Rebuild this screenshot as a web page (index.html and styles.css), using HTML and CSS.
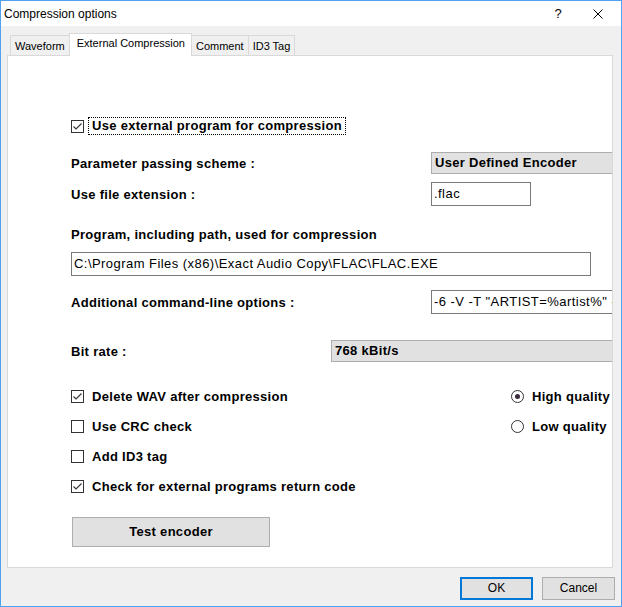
FILE: index.html
```html
<!DOCTYPE html>
<html lang="en">
<head>
    <meta charset="UTF-8">
    <title>Compression options</title>
    <link rel="stylesheet" href="styles.css">
</head>
<body>
    <div class="window">
        <div class="titlebar">
            <span class="title">Compression options</span>
            <span class="help">?</span>
            <span class="close">
                <svg width="10" height="10" viewBox="0 0 10 10"><path d="M0.5 0.5 L9.5 9.5 M9.5 0.5 L0.5 9.5" stroke="#000" stroke-width="1" fill="none"/></svg>
            </span>
        </div>

        <div class="body">
            <div class="tabs">
                <div class="tab">Waveform</div>
                <div class="tab active">External Compression</div>
                <div class="tab">Comment</div>
                <div class="tab">ID3 Tag</div>
            </div>

            <div class="panel">
                <div class="row row-use">
                    <span class="box checked"><svg width="11" height="11" viewBox="0 0 11 11"><path d="M1.5 5.5 L4 8 L9.5 2.5" stroke="#333" stroke-width="1.1" fill="none"/></svg></span>
                    <span class="focus">Use external program for compression</span>
                </div>

                <div class="row row-scheme">
                    <span class="label">Parameter passing scheme :</span>
                    <div class="combo">User Defined Encoder</div>
                </div>

                <div class="row row-ext">
                    <span class="label">Use file extension :</span>
                    <div class="field field-ext">.flac</div>
                </div>

                <div class="row row-prog-label">
                    <span>Program, including path, used for compression</span>
                </div>

                <div class="row row-prog">
                    <div class="field field-prog">C:\Program Files (x86)\Exact Audio Copy\FLAC\FLAC.EXE</div>
                </div>

                <div class="row row-opts">
                    <span class="label">Additional command-line options :</span>
                    <div class="field field-opts">-6 -V -T "ARTIST=%artist%" -T</div>
                </div>

                <div class="row row-bitrate">
                    <span class="label label-short">Bit rate :</span>
                    <div class="combo combo-wide">768 kBit/s</div>
                </div>

                <div class="row row-first">
                    <div class="check">
                        <span class="box checked"><svg width="11" height="11" viewBox="0 0 11 11"><path d="M1.5 5.5 L4 8 L9.5 2.5" stroke="#333" stroke-width="1.1" fill="none"/></svg></span>
                        <span>Delete WAV after compression</span>
                    </div>
                    <div class="radio-item">
                        <span class="radio selected"></span>
                        <span>High quality</span>
                    </div>
                </div>

                <div class="row row-next">
                    <div class="check">
                        <span class="box"></span>
                        <span>Use CRC check</span>
                    </div>
                    <div class="radio-item">
                        <span class="radio"></span>
                        <span>Low quality</span>
                    </div>
                </div>

                <div class="row row-next">
                    <div class="check">
                        <span class="box"></span>
                        <span>Add ID3 tag</span>
                    </div>
                </div>

                <div class="row row-next">
                    <div class="check">
                        <span class="box checked"><svg width="11" height="11" viewBox="0 0 11 11"><path d="M1.5 5.5 L4 8 L9.5 2.5" stroke="#333" stroke-width="1.1" fill="none"/></svg></span>
                        <span>Check for external programs return code</span>
                    </div>
                </div>

                <div class="row row-button">
                    <div class="button test">Test encoder</div>
                </div>
            </div>

            <div class="footer">
                <div class="button dialog default">OK</div>
                <div class="button dialog">Cancel</div>
            </div>
        </div>
    </div>
</body>
</html>
```

FILE: styles.css
```css
body {
    margin: 0;
    font-family: "Liberation Sans", Arial, sans-serif;
    color: #000;
}
.window {
    width: 622px;
    height: 607px;
    box-sizing: border-box;
    border: 1px solid #4ea2ee;
    background-color: #f0f0f0;
    display: flex;
    flex-direction: column;
}
.titlebar {
    height: 25px;
    background-color: #fff;
    display: flex;
    align-items: center;
    font-size: 12px;
}
.title {
    padding-left: 3px;
    flex: 1;
}
.help {
    width: 20px;
    text-align: center;
    font-size: 13px;
    margin-right: 25px;
}
.close {
    width: 10px;
    height: 10px;
    margin-right: 18px;
    display: flex;
}
.body {
    padding: 0 8px 0 6px;
}
.tabs {
    display: flex;
    align-items: flex-end;
    padding: 7px 0 0 3px;
}
.tab {
    height: 20px;
    box-sizing: border-box;
    border: 1px solid #d9d9d9;
    border-bottom: none;
    border-right: none;
    padding: 4px 4px 0 4px;
    font-size: 11px;
    background-color: #f0f0f0;
}
.tab:last-child {
    border-right: 1px solid #d9d9d9;
}
.tab.active {
    height: 23px;
    background-color: #fff;
    border-right: 1px solid #d9d9d9;
    margin-bottom: -1px;
    padding: 3px 6px 0 7px;
    position: relative;
    z-index: 1;
}
.tab.active + .tab {
    border-left: none;
}
.panel {
    height: 513px;
    box-sizing: border-box;
    border: 1px solid #d9d9d9;
    background-color: #fff;
    padding: 61px 0 0 63px;
    overflow: hidden;
    font-size: 13px;
    font-weight: bold;
    letter-spacing: 0.3px;
}
.row {
    display: flex;
    align-items: center;
}
.row > * {
    flex-shrink: 0;
}
.row-use { height: 18px; }
.row-scheme { height: 22px; margin-top: 17px; }
.row-ext { height: 24px; margin-top: 8px; }
.row-prog-label { height: 16px; margin-top: 20px; }
.row-prog { height: 24px; margin-top: 10px; }
.row-opts { height: 24px; margin-top: 14px; }
.row-bitrate { height: 22px; margin-top: 26px; }
.row-first { height: 20px; margin-top: 24px; }
.row-next { height: 20px; margin-top: 10px; }
.row-button { height: 30px; margin-top: 21px; }

.label {
    width: 360px;
}
.label-short {
    width: 260px;
}
.box {
    width: 13px;
    height: 13px;
    box-sizing: border-box;
    border: 1px solid #333;
    display: flex;
    align-items: center;
    justify-content: center;
    margin-right: 8px;
}
.row-use .box {
    margin-right: 4px;
}
.focus {
    border: 1px dotted #000;
    padding: 0 3px;
    height: 16px;
    line-height: 16px;
}
.check {
    width: 440px;
    display: flex;
    align-items: center;
}
.radio-item {
    display: flex;
    align-items: center;
}
.radio {
    width: 13px;
    height: 13px;
    box-sizing: border-box;
    border: 1px solid #333;
    border-radius: 50%;
    margin-right: 8px;
    display: flex;
    align-items: center;
    justify-content: center;
}
.radio.selected::after {
    content: "";
    width: 5px;
    height: 5px;
    border-radius: 50%;
    background-color: #3b2b3b;
}
.combo {
    width: 190px;
    height: 22px;
    box-sizing: border-box;
    border: 1px solid #adadad;
    background-color: #e1e1e1;
    padding-left: 3px;
    line-height: 20px;
}
.combo-wide {
    width: 290px;
}
.field {
    height: 24px;
    box-sizing: border-box;
    border: 1px solid #7a7a7a;
    background-color: #fff;
    padding-left: 2px;
    line-height: 22px;
    font-weight: normal;
    letter-spacing: 0.45px;
    white-space: nowrap;
    overflow: hidden;
}
.field-ext {
    width: 100px;
}
.field-prog {
    width: 520px;
}
.field-opts {
    width: 250px;
}
.button {
    box-sizing: border-box;
    border: 1px solid #adadad;
    background-color: #e1e1e1;
    text-align: center;
}
.test {
    width: 198px;
    height: 30px;
    line-height: 28px;
    margin-left: 1px;
}
.footer {
    display: flex;
    justify-content: flex-end;
    gap: 9px;
    margin-top: 9px;
    margin-right: -2px;
}
.dialog {
    width: 73px;
    height: 23px;
    line-height: 21px;
    font-size: 12px;
}
.dialog.default {
    border: 2px solid #0078d7;
    line-height: 19px;
}
```
